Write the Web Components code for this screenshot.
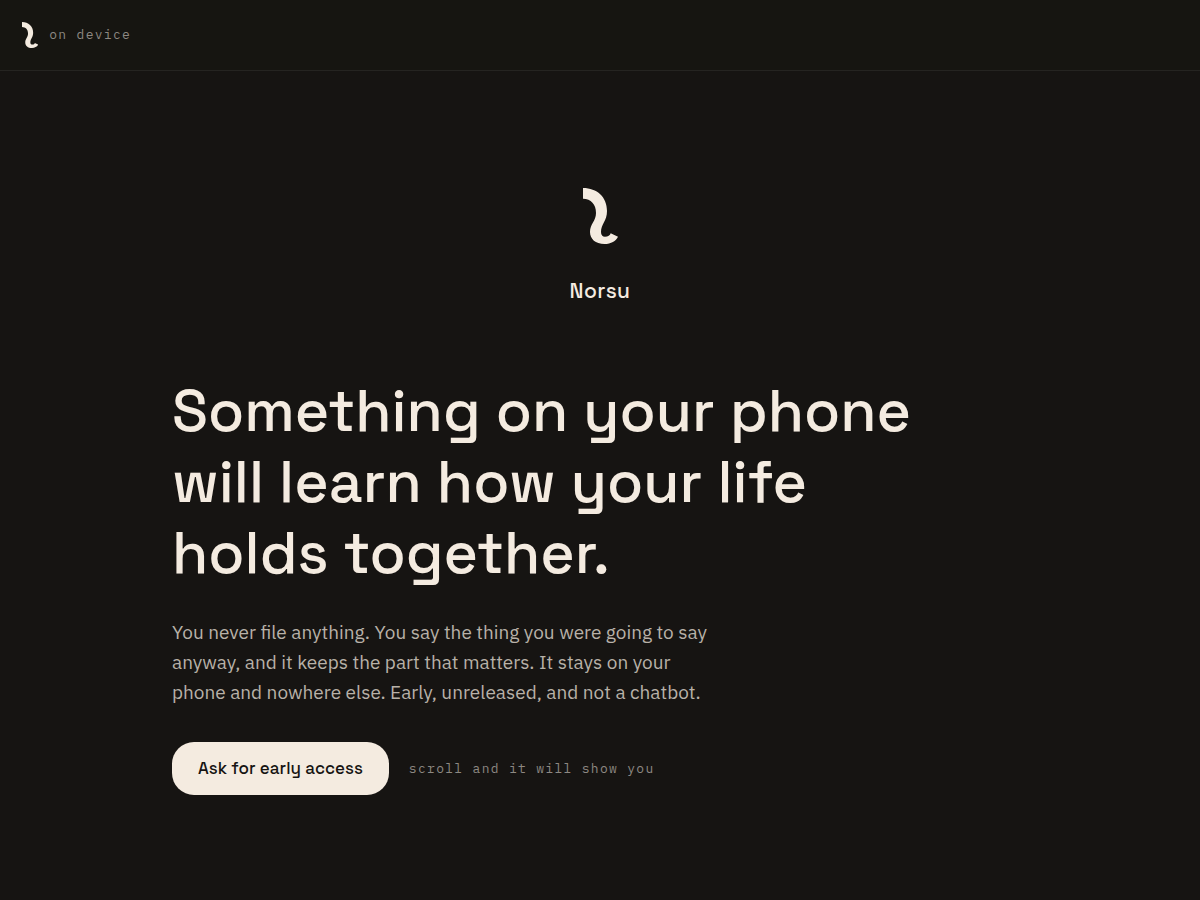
<!DOCTYPE html>
<html lang="en">
<head>
<meta charset="utf-8">
<meta name="viewport" content="width=device-width, initial-scale=1">
<title>Norsu</title>
<style>
  :root {
    --ground: #161412;
    --bar: #161511;
    --line: #252421;
    --cream: #f4ebe0;
    --body: #b8b1a8;
    --faint: #8d8882;
    --display: "Space Grotesk", Inter, sans-serif;
    --text: "IBM Plex Sans", "Open Sans", sans-serif;
    --mono: "IBM Plex Mono", "Liberation Mono", monospace;
  }
  html { background: var(--ground); }
  body { margin: 0; color: var(--cream); font-family: var(--text); }
</style>
</head>
<body>
<norsu-page></norsu-page>
<script>
class NorsuMark extends HTMLElement {
  constructor() {
    super();
    this.attachShadow({ mode: "open" }).innerHTML = `
      <style>
        :host { display: block; height: 56px; }
        svg { display: block; height: 100%; width: auto; }
        path { fill: currentColor; }
      </style>
      <svg viewBox="0 0 35 56" aria-hidden="true">
        <path d="M0 0C14 0 24 9 24 23C24 33 18 36 18 44C18 47 19.500 48.700 22 48.700C25 48.700 27 47.500 27.700 45.300L35 48.700C33 53 28 56 21.500 56C12.500 56 7 51 7 44C7 36 13 33 13 25C13 16 8 11 0 10.700Z"/>
      </svg>`;
  }
}
customElements.define("norsu-mark", NorsuMark);

class MonoNote extends HTMLElement {
  constructor() {
    super();
    this.attachShadow({ mode: "open" }).innerHTML = `
      <style>
        :host { display: block; font: 13px/20px var(--mono); letter-spacing: 0.1em; color: var(--faint); }
      </style>
      <slot></slot>`;
  }
}
customElements.define("mono-note", MonoNote);

class TopBar extends HTMLElement {
  constructor() {
    super();
    this.attachShadow({ mode: "open" }).innerHTML = `
      <style>
        :host { display: block; background: var(--bar); border-bottom: 1px solid var(--line); }
        header { display: flex; align-items: center; gap: 11px; padding: 22px; }
        norsu-mark { height: 26px; }
      </style>
      <header><norsu-mark></norsu-mark><mono-note><slot></slot></mono-note></header>`;
  }
}
customElements.define("top-bar", TopBar);

class BrandLockup extends HTMLElement {
  constructor() {
    super();
    this.attachShadow({ mode: "open" }).innerHTML = `
      <style>
        :host { display: flex; flex-direction: column; align-items: center; gap: 33px; }
        p { margin: 0; font: 500 21px/28px var(--display); letter-spacing: 0.02em; }
      </style>
      <norsu-mark></norsu-mark><p><slot></slot></p>`;
  }
}
customElements.define("brand-lockup", BrandLockup);

class PillButton extends HTMLElement {
  constructor() {
    super();
    this.attachShadow({ mode: "open" }).innerHTML = `
      <style>
        :host { display: block; }
        button { border: 0; border-radius: 22px; padding: 16px 26px; background: var(--cream); color: var(--ground);
          font: 500 17px/21px var(--display); cursor: pointer; }
      </style>
      <button type="button"><slot></slot></button>`;
  }
}
customElements.define("pill-button", PillButton);

class HeroIntro extends HTMLElement {
  constructor() {
    super();
    this.attachShadow({ mode: "open" }).innerHTML = `
      <style>
        :host { display: block; }
        h1, p { margin: 0; }
        h1 { max-width: 800px; font: 500 59px/71px var(--display); }
        p { max-width: 544px; margin-top: 29px; font: 19px/30px var(--text); color: var(--body); }
        div { display: flex; flex-wrap: wrap; align-items: center; gap: 20px; margin-top: 35px; }
      </style>
      <h1><slot name="title"></slot></h1>
      <p><slot></slot></p>
      <div><slot name="actions"></slot></div>`;
  }
}
customElements.define("hero-intro", HeroIntro);

class NorsuPage extends HTMLElement {
  constructor() {
    super();
    this.attachShadow({ mode: "open" }).innerHTML = `
      <style>
        :host { display: block; }
        main { max-width: 856px; margin: 0 auto; padding: 117px 24px 104px; }
        hero-intro { margin-top: 70px; }
      </style>
      <top-bar>on device</top-bar>
      <main>
        <brand-lockup>Norsu</brand-lockup>
        <hero-intro>
          <span slot="title">Something on your phone will learn how your life holds together.</span>
          You never file anything. You say the thing you were going to say anyway, and it keeps the part that matters. It stays on your phone and nowhere else. Early, unreleased, and not a chatbot.
          <pill-button slot="actions">Ask for early access</pill-button>
          <mono-note slot="actions">scroll and it will show you</mono-note>
        </hero-intro>
      </main>`;
  }
}
customElements.define("norsu-page", NorsuPage);
</script>
</body>
</html>
